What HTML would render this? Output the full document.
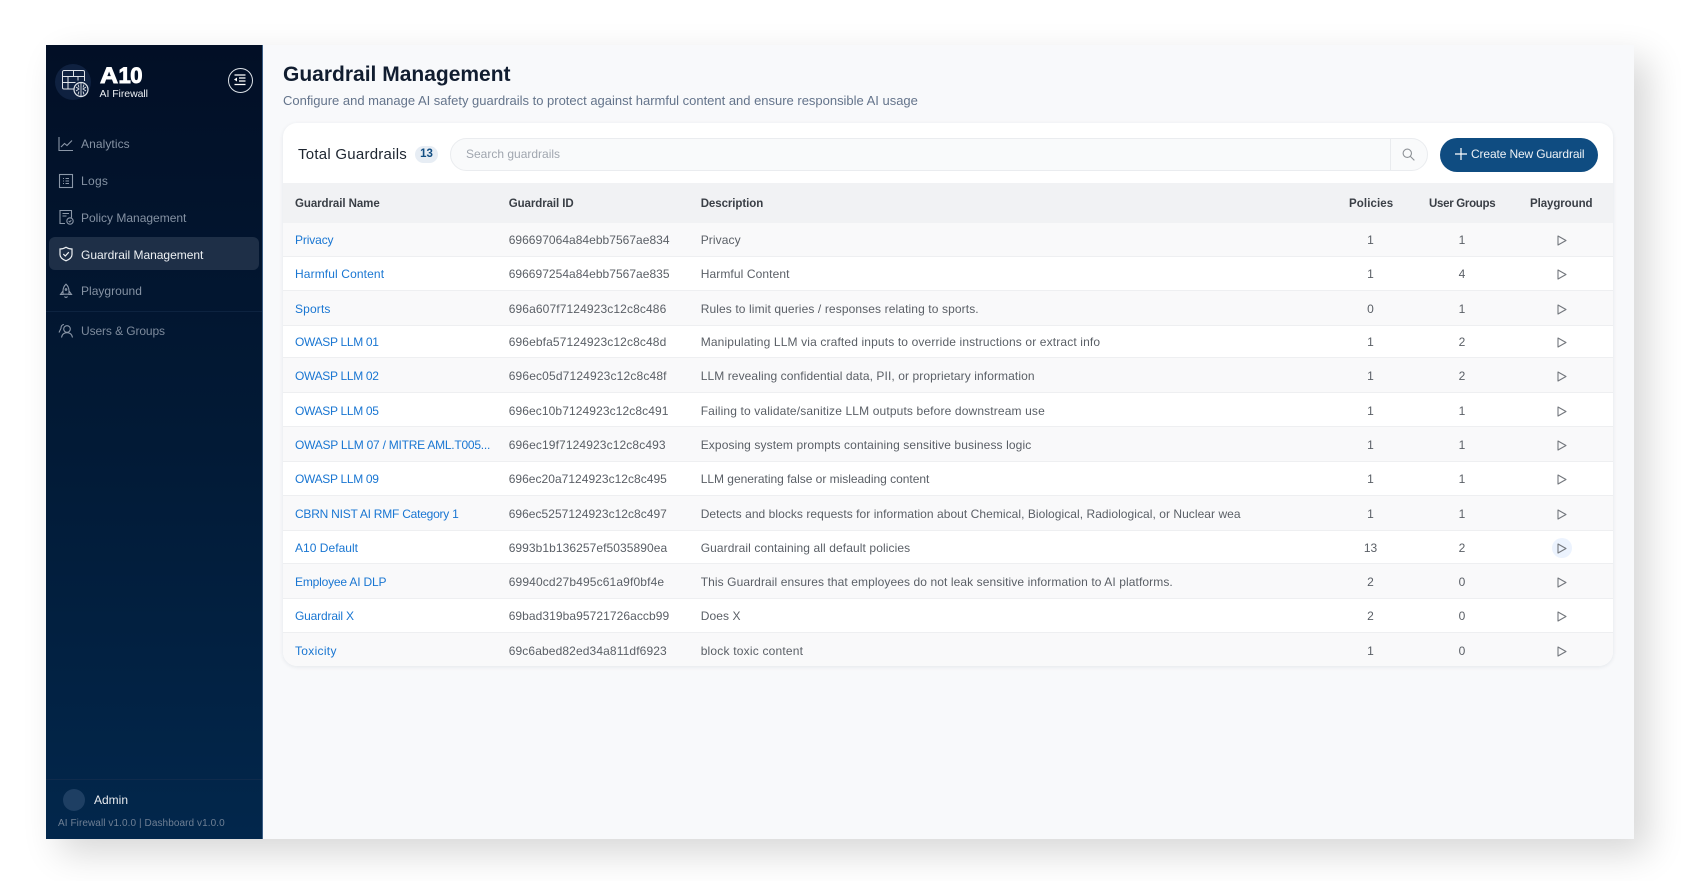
<!DOCTYPE html>
<html><head><meta charset="utf-8"><style>
*{box-sizing:border-box}
html,body{margin:0;padding:0;width:1681px;height:881px;overflow:hidden;background:#fff;font-family:"Liberation Sans",sans-serif}
#all{position:absolute;left:0;top:0;width:1681px;height:881px;filter:blur(.3px)}
.a{position:absolute;white-space:nowrap}
#win{position:absolute;left:46px;top:45px;width:1588px;height:794px;background:#f8f9fb;box-shadow:14px 14px 34px rgba(0,0,0,.16)}
#side{position:absolute;left:46px;top:45px;width:217px;height:794px;background:linear-gradient(180deg,#020f26 0%,#021a36 50%,#02274c 100%);border-right:1px solid #3d5f86}
.nav{position:absolute;left:81px;font-size:12px;letter-spacing:0;color:#8592a3;line-height:14px;white-space:nowrap}
.ic{position:absolute;left:58px;width:16px;height:16px;fill:none;stroke:#8b97a8;stroke-width:1.1}
#card{position:absolute;left:283px;top:123px;width:1330px;height:543px;background:#fff;border-radius:14px;box-shadow:0 1px 4px rgba(20,40,70,.09);overflow:hidden}
#th{position:absolute;left:0;top:60px;width:1330px;height:40px;background:#f1f2f4;font-size:11.5px;font-weight:bold;color:#3a3f46;letter-spacing:-.07px}
#th span{position:absolute;top:14px;line-height:14px;white-space:nowrap}
.r{position:absolute;left:0;width:1330px;border-bottom:1px solid #eeeff1;font-size:12px;color:#5a5f66;letter-spacing:.1px}
.r:nth-child(odd){background:#f9f9fa}
.r span,.r a{position:absolute;top:10px;line-height:14px;white-space:nowrap}
.r a{left:12px;color:#1976d2;text-decoration:none}
.r .i{left:225.7px;letter-spacing:.03px}
.r .d{left:417.7px}
.r .p,.r .u{width:40px;text-align:center;letter-spacing:0}
.r .p{left:1067.5px}.r .u{left:1159px}
.r svg{position:absolute;left:1274px;top:12px;width:10px;height:11px;fill:none;stroke:#73777d;stroke-width:1.1;stroke-linejoin:round}
.r.t9 span,.r.t9 a{top:9px}.r.t9 svg{top:11px}
.r.t11 span,.r.t11 a{top:11px}.r.t11 svg{top:13px}
.hov{position:absolute;left:1269px;top:7px;width:20px;height:20px;border-radius:50%;background:#ecf3fe}
</style></head><body>
<div id="all">
<div id="win"></div>
<div id="side"></div>

<!-- logo -->
<div class="a" style="left:55px;top:64px;width:36px;height:36px;border-radius:50%;background:#0f2140"></div>
<svg class="a" style="left:61px;top:69px" width="28" height="29" viewBox="0 0 28 29" fill="none" stroke="#dfe3e8" stroke-width="1">
<path d="M14 20H3a1.5 1.500 0 0 1-1.500-1.500V3A1.500 1.500 0 0 1 3 1.500h19A1.500 1.500 0 0 1 23.500 3v9"/>
<path d="M1.500 7.500h22M12.500 1.500v6M1.500 13.500h13M7 7.500v6M17 7.500v4M7 13.500V20"/>
<circle cx="20" cy="20.500" r="7" fill="#0f2140" stroke-width="1.200"/>
<path d="M20 14v13M15 18l3 2-3 2M25 18l-3 2 3 2M17 15.500l1 3M23 15.500l-1 3M17 25.500l1-3M23 25.500l-1-3" stroke-width=".9"/>
</svg>
<div class="a" style="left:100px;top:63.500px;font-size:22px;line-height:24px;font-weight:bold;color:#fff;letter-spacing:-.5px;-webkit-text-stroke:.9px #fff"><span style="display:inline-block;width:18.500px;transform:scaleX(1.140);transform-origin:0 50%">A</span>10</div>
<div class="a" style="left:99.500px;top:86.500px;font-size:10.500px;line-height:14px;color:#eceff3;letter-spacing:-.05px">AI Firewall</div>
<div class="a" style="left:227.500px;top:67.500px;width:25px;height:25px;border-radius:50%;border:1px solid #dce1e7"></div>
<svg class="a" style="left:233px;top:74px" width="14" height="12" viewBox="0 0 14 12" fill="none" stroke="#fff" stroke-width="1.200"><path d="M1.500 1h11M6 4h6.500M6 7h6.500M1.500 10.500h11"/><path d="M1 5.500l3-2v4z" fill="#fff" stroke="none"/></svg>

<!-- nav -->
<svg class="ic" style="top:136px" viewBox="0 0 16 16"><path d="M1 1v13.500h14"/><path d="M3 11l3.500-3.500 2.500 2 5-5"/></svg>
<div class="nav" style="top:137px;letter-spacing:.08px">Analytics</div>
<svg class="ic" style="top:173px" viewBox="0 0 16 16"><rect x="1.500" y="1.500" width="13" height="13"/><path d="M5 5.500h1M5 8h1M5 10.500h1M7.500 5.500h3.500M7.500 8h3.500M7.500 10.500h3.500"/></svg>
<div class="nav" style="top:174px;letter-spacing:.3px">Logs</div>
<svg class="ic" style="top:209px" viewBox="0 0 16 16"><path d="M7 14.500H2V1.500h11.500v7"/><path d="M4.500 4.500h6.500M4.500 7h4"/><circle cx="12" cy="12" r="3.200"/><path d="M10.700 12l1 1 1.600-1.800" stroke-width=".9"/></svg>
<div class="nav" style="top:210.500px">Policy Management</div>
<div class="a" style="left:49px;top:237px;width:210px;height:33px;border-radius:6px;background:#1e2f47"></div>
<svg class="ic" style="top:246px;stroke:#eef1f4;stroke-width:1.200" viewBox="0 0 16 16"><path d="M8 1.200c2 1.300 3.800 1.700 6 1.800v5.500c0 3-2.600 5-6 6.300-3.400-1.300-6-3.300-6-6.300V3c2.200-.1 4-.5 6-1.800z"/><path d="M5.300 8l2 2 3.500-3.800"/></svg>
<div class="nav" style="top:247.500px;color:#eef1f4;letter-spacing:-.02px">Guardrail Management</div>
<svg class="ic" style="top:283px" viewBox="0 0 16 16"><path d="M8 1.200c2 1.800 3 4 3 7v3H5v-3c0-3 1-5.200 3-7z"/><path d="M5 8l-2.500 3.500h3M11 8l2.500 3.500h-3M6.500 13.500c1 1.300 2 1.300 3 0"/><circle cx="8" cy="6.500" r=".8"/></svg>
<div class="nav" style="top:284px;letter-spacing:.02px">Playground</div>
<div class="a" style="left:46px;top:311px;width:216px;height:1px;background:#0d2340"></div>
<svg class="ic" style="top:323px" viewBox="0 0 16 16"><circle cx="9" cy="6" r="3.300"/><path d="M3.500 14.500c.5-3 2.500-4.800 5.500-4.800s5 1.800 5.500 4.800"/><path d="M6 1.500C4 1.700 3 3.200 3 5.300L1 9.500"/></svg>
<div class="nav" style="top:324px;letter-spacing:-.1px;color:#7d8a9c">Users &amp; Groups</div>

<!-- footer -->
<div class="a" style="left:46px;top:779px;width:216px;height:1px;background:#0f2b4c"></div>
<div class="a" style="left:63px;top:789px;width:22px;height:22px;border-radius:50%;background:#1e3f63"></div>
<div class="a" style="left:94px;top:793px;font-size:12px;line-height:14px;color:#e8ebef;letter-spacing:0">Admin</div>
<div class="a" style="left:58px;top:817.500px;font-size:10px;line-height:12px;color:#6f7f94;letter-spacing:.08px">AI Firewall v1.0.0 | Dashboard v1.0.0</div>

<!-- header -->
<div class="a" style="left:283px;top:61px;font-size:21px;line-height:27px;font-weight:bold;color:#111d30">Guardrail Management</div>
<div class="a" style="left:283px;top:93px;font-size:13px;line-height:16px;color:#64748b;letter-spacing:-.01px">Configure and manage AI safety guardrails to protect against harmful content and ensure responsible AI usage</div>

<!-- card -->
<div id="card">
<div class="a" style="left:15px;top:23px;font-size:15px;line-height:18px;color:#1d2530;letter-spacing:.25px">Total Guardrails</div>
<div class="a" style="left:132px;top:22.500px;width:23px;height:17px;border-radius:9px;background:#e7edf4;color:#134f83;font-size:11.500px;font-weight:bold;line-height:17px;text-align:center">13</div>
<div class="a" style="left:167px;top:15px;width:978px;height:33px;border-radius:17px;background:#f9fafb;border:1px solid #eaecef"></div>
<div class="a" style="left:1107px;top:16px;width:1px;height:31px;background:#e9ebee"></div>
<div class="a" style="left:183px;top:24px;font-size:12px;line-height:15px;color:#a0a6af;letter-spacing:0">Search guardrails</div>
<svg class="a" style="left:1119px;top:25px" width="13" height="13" viewBox="0 0 14 14" fill="none" stroke="#8d9196" stroke-width="1.200"><circle cx="5.700" cy="5.700" r="4.500"/><path d="M9 9l4.300 4.300"/></svg>
<div class="a" style="left:1156.500px;top:14.500px;width:158.500px;height:34px;border-radius:17px;background:#0f4c81"></div>
<svg class="a" style="left:1171px;top:23.500px" width="14" height="14" viewBox="0 0 14 14" stroke="#fff" stroke-width="1.200"><path d="M7 1v12M1 7h12"/></svg>
<div class="a" style="left:1188px;top:24px;font-size:12px;line-height:15px;color:#eef2f6;letter-spacing:-.13px">Create New Guardrail</div>

<div id="th"><span style="left:12px">Guardrail Name</span><span style="left:225.7px">Guardrail ID</span><span style="left:417.7px">Description</span><span style="left:1066px;letter-spacing:.1px">Policies</span><span style="left:1146px;letter-spacing:-.3px">User Groups</span><span style="left:1247px;letter-spacing:-.08px">Playground</span></div>

<div style="position:absolute;left:0;top:100px;width:1330px;height:443px">
<div class="r" style="top:0;height:34px"><a style="letter-spacing:-.13px">Privacy</a><span class="i">696697064a84ebb7567ae834</span><span class="d" style="letter-spacing:.1px">Privacy</span><span class="p">1</span><span class="u">1</span><svg viewBox="0 0 10 11"><path d="M1 1l8 4.500-8 4.500z"/></svg></div>
<div class="r" style="top:34px;height:34px"><a style="letter-spacing:.12px">Harmful Content</a><span class="i">696697254a84ebb7567ae835</span><span class="d">Harmful Content</span><span class="p">1</span><span class="u">4</span><svg viewBox="0 0 10 11"><path d="M1 1l8 4.500-8 4.500z"/></svg></div>
<div class="r t11" style="top:68px;height:35px"><a style="letter-spacing:.15px">Sports</a><span class="i" style="letter-spacing:.12px">696a607f7124923c12c8c486</span><span class="d" style="letter-spacing:.11px">Rules to limit queries / responses relating to sports.</span><span class="p">0</span><span class="u">1</span><svg viewBox="0 0 10 11"><path d="M1 1l8 4.500-8 4.500z"/></svg></div>
<div class="r t9" style="top:103px;height:32px"><a style="letter-spacing:-.31px">OWASP LLM 01</a><span class="i" style="letter-spacing:.12px">696ebfa57124923c12c8c48d</span><span class="d" style="letter-spacing:.14px">Manipulating LLM via crafted inputs to override instructions or extract info</span><span class="p">1</span><span class="u">2</span><svg viewBox="0 0 10 11"><path d="M1 1l8 4.500-8 4.500z"/></svg></div>
<div class="r t11" style="top:135px;height:35px"><a style="letter-spacing:-.31px">OWASP LLM 02</a><span class="i" style="letter-spacing:.16px">696ec05d7124923c12c8c48f</span><span class="d" style="letter-spacing:.09px">LLM revealing confidential data, PII, or proprietary information</span><span class="p">1</span><span class="u">2</span><svg viewBox="0 0 10 11"><path d="M1 1l8 4.500-8 4.500z"/></svg></div>
<div class="r t11" style="top:170px;height:34px"><a style="letter-spacing:-.31px">OWASP LLM 05</a><span class="i" style="letter-spacing:.1px">696ec10b7124923c12c8c491</span><span class="d" style="letter-spacing:.14px">Failing to validate/sanitize LLM outputs before downstream use</span><span class="p">1</span><span class="u">1</span><svg viewBox="0 0 10 11"><path d="M1 1l8 4.500-8 4.500z"/></svg></div>
<div class="r t11" style="top:204px;height:35px"><a style="letter-spacing:-.24px">OWASP LLM 07 / MITRE AML.T005...</a><span class="i" style="letter-spacing:.12px">696ec19f7124923c12c8c493</span><span class="d" style="letter-spacing:.11px">Exposing system prompts containing sensitive business logic</span><span class="p">1</span><span class="u">1</span><svg viewBox="0 0 10 11"><path d="M1 1l8 4.500-8 4.500z"/></svg></div>
<div class="r" style="top:239px;height:34px"><a style="letter-spacing:-.31px">OWASP LLM 09</a><span class="i">696ec20a7124923c12c8c495</span><span class="d" style="letter-spacing:-.02px">LLM generating false or misleading content</span><span class="p">1</span><span class="u">1</span><svg viewBox="0 0 10 11"><path d="M1 1l8 4.500-8 4.500z"/></svg></div>
<div class="r t11" style="top:273px;height:35px"><a style="letter-spacing:-.23px">CBRN NIST AI RMF Category 1</a><span class="i">696ec5257124923c12c8c497</span><span class="d" style="letter-spacing:.05px">Detects and blocks requests for information about Chemical, Biological, Radiological, or Nuclear wea</span><span class="p">1</span><span class="u">1</span><svg viewBox="0 0 10 11"><path d="M1 1l8 4.500-8 4.500z"/></svg></div>
<div class="r" style="top:308px;height:33px"><a style="letter-spacing:.03px">A10 Default</a><span class="i" style="letter-spacing:.07px">6993b1b136257ef5035890ea</span><span class="d">Guardrail containing all default policies</span><span class="p">13</span><span class="u">2</span><div class="hov"></div><svg viewBox="0 0 10 11"><path d="M1 1l8 4.500-8 4.500z"/></svg></div>
<div class="r t11" style="top:341px;height:35px"><a style="letter-spacing:-.18px">Employee AI DLP</a><span class="i" style="letter-spacing:.14px">69940cd27b495c61a9f0bf4e</span><span class="d" style="letter-spacing:.09px">This Guardrail ensures that employees do not leak sensitive information to AI platforms.</span><span class="p">2</span><span class="u">0</span><svg viewBox="0 0 10 11"><path d="M1 1l8 4.500-8 4.500z"/></svg></div>
<div class="r" style="top:376px;height:34px"><a style="letter-spacing:-.17px">Guardrail X</a><span class="i" style="letter-spacing:.07px">69bad319ba95721726accb99</span><span class="d">Does X</span><span class="p">2</span><span class="u">0</span><svg viewBox="0 0 10 11"><path d="M1 1l8 4.500-8 4.500z"/></svg></div>
<div class="r t11" style="top:410px;height:33px;border-bottom:0"><a style="letter-spacing:.3px">Toxicity</a><span class="i" style="letter-spacing:.12px">69c6abed82ed34a811df6923</span><span class="d" style="letter-spacing:.2px">block toxic content</span><span class="p">1</span><span class="u">0</span><svg viewBox="0 0 10 11"><path d="M1 1l8 4.500-8 4.500z"/></svg></div>
</div>
</div>
</div>
</body></html>
